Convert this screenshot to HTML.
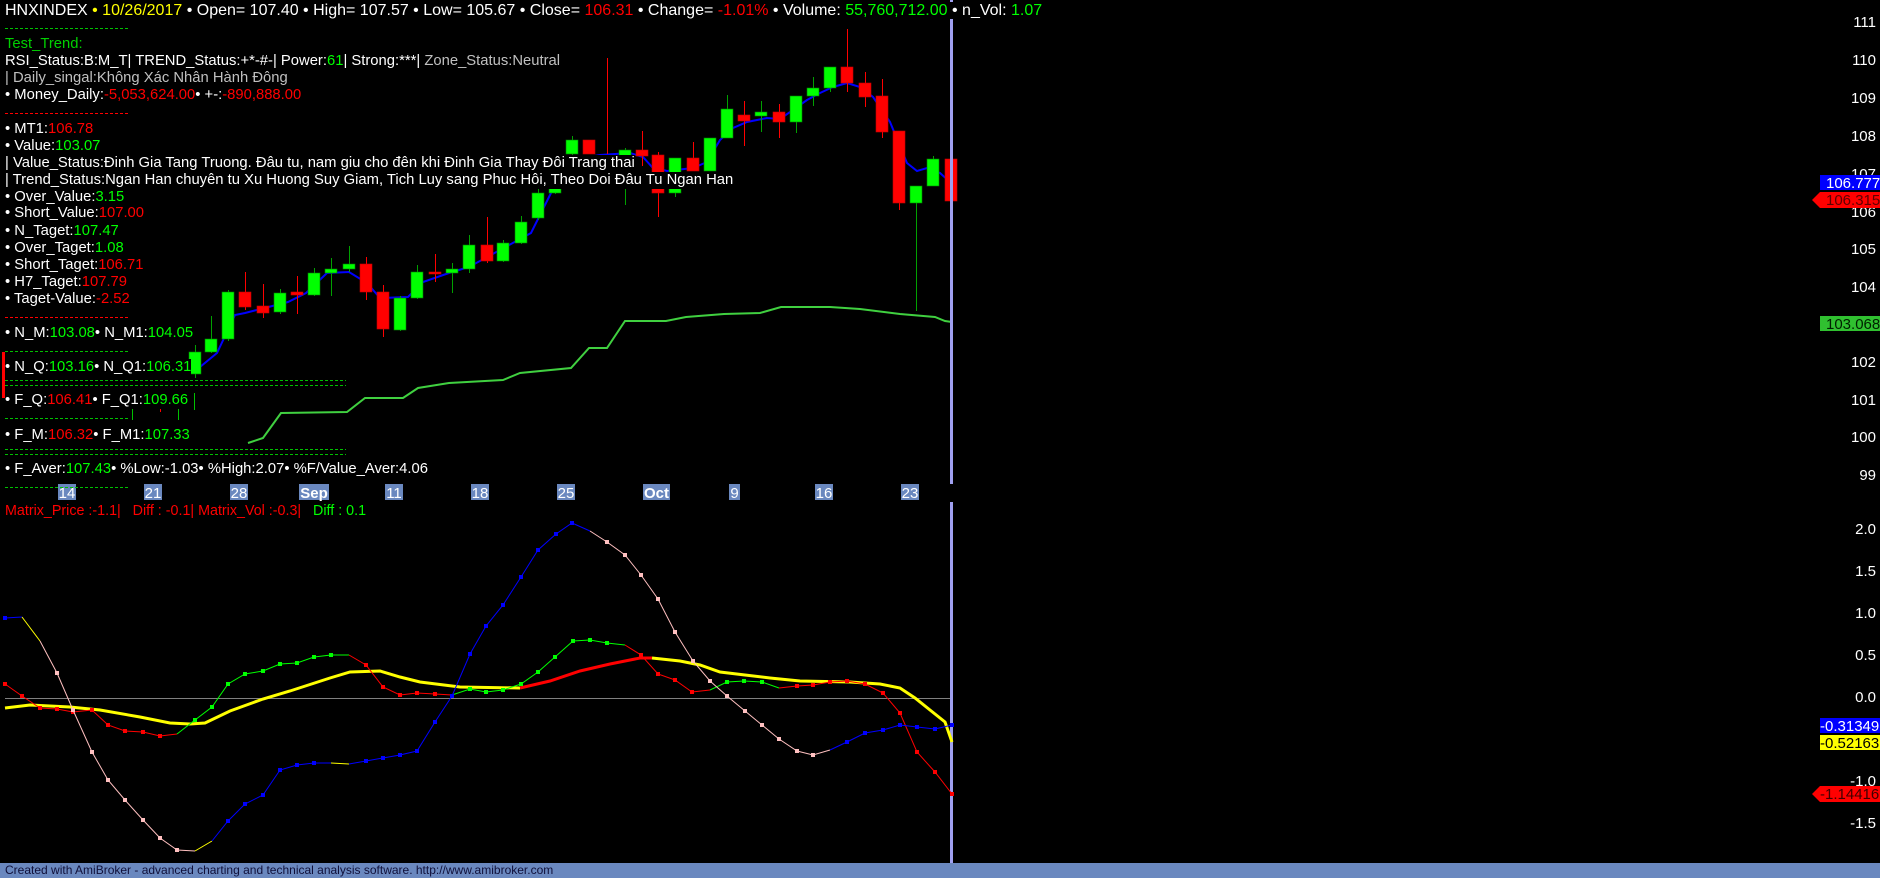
<!DOCTYPE html>
<html><head><meta charset="utf-8"><style>
html,body{margin:0;padding:0;background:#000;width:1880px;height:878px;overflow:hidden}
body{position:relative;font-family:"Liberation Sans",Arial,sans-serif}
svg{position:absolute;left:0;top:0}
.t{position:absolute;left:5px;font-size:14.8px;line-height:17px;color:#fff;background:#000;white-space:nowrap}
.h{font-size:16px}
.g{color:#00ff00}.r{color:#ff0000}.y{color:#ffff00}.gr{color:#c0c0c0}.tg{color:#00d000}
.foot{position:absolute;left:0;top:863px;width:1880px;height:15px;background:#6a88bf;color:#10103a;font-size:12px;line-height:15px;padding-left:5px;box-sizing:border-box}
</style></head><body>
<svg width="1880" height="878" xmlns="http://www.w3.org/2000/svg">
<defs>
<marker id="mr" markerWidth="4" markerHeight="4" refX="2" refY="2" markerUnits="userSpaceOnUse"><rect width="4" height="4" fill="#ff0000"/></marker>
<marker id="mg" markerWidth="4" markerHeight="4" refX="2" refY="2" markerUnits="userSpaceOnUse"><rect width="4" height="4" fill="#00ff00"/></marker>
<marker id="mb" markerWidth="4" markerHeight="4" refX="2" refY="2" markerUnits="userSpaceOnUse"><rect width="4" height="4" fill="#0000ff"/></marker>
<marker id="mp" markerWidth="4" markerHeight="4" refX="2" refY="2" markerUnits="userSpaceOnUse"><rect width="4" height="4" fill="#ffc0c0"/></marker>
<marker id="my" markerWidth="4" markerHeight="4" refX="2" refY="2" markerUnits="userSpaceOnUse"><rect width="4" height="4" fill="#ffff00"/></marker>
</defs>
<polyline fill="none" stroke="#40d040" stroke-width="2" points="248,443 263,438 281,413 347,412 365,398 403,398 418,388 449,383 503,380 520,373 571,368 589,348 607,348 625,321 666,321 686,317 724,314 760,313 781,307 830,307 860,309 900,314 935,317 945,321 952,322"/>
<polyline fill="none" stroke="#0000ff" stroke-width="2" points="200,367 217,353 235,315 245,313 288,302 306,293 327,273 349,272 367,283 380,298 408,297 423,282 449,273 469,267 531,233 551,193 572,160 600,155 630,153 643,157 652,167 667,171 693,168 707,162 720,140 733,128 747,122 767,118 780,119 793,110 807,100 820,93 833,87 847,83 860,87 873,97 890,122 907,163 917,171 927,168 940,173 950,182"/>
<g id="candles"></g>
<g stroke-width="1">
<line x1="607.5" y1="58" x2="607.5" y2="154" stroke="#ff0000"/>
<line x1="132.5" y1="393" x2="132.5" y2="420" stroke="#00c000"/>
<line x1="142.5" y1="393" x2="142.5" y2="405" stroke="#00c000"/>
<line x1="160.5" y1="393" x2="160.5" y2="412" stroke="#ff0000"/>
<line x1="178.5" y1="393" x2="178.5" y2="420" stroke="#00c000"/>
<line x1="194.5" y1="393" x2="194.5" y2="410" stroke="#00c000"/>
</g>
<rect x="950" y="0" width="3" height="484" fill="#a0a0f0"/>
<rect x="950" y="502" width="3" height="361" fill="#a0a0f0"/>
<g font-size="15" fill="#fff" text-anchor="middle">
<rect x="58" y="484" width="18" height="16" fill="#6a88bf"/><text x="67" y="498">14</text>
<rect x="144" y="484" width="18" height="16" fill="#6a88bf"/><text x="153" y="498">21</text>
<rect x="230" y="484" width="18" height="16" fill="#6a88bf"/><text x="239" y="498">28</text>
<rect x="299" y="484" width="30" height="16" fill="#6a88bf"/><text x="314" y="498" font-weight="bold">Sep</text>
<rect x="385" y="484" width="18" height="16" fill="#6a88bf"/><text x="394" y="498">11</text>
<rect x="471" y="484" width="18" height="16" fill="#6a88bf"/><text x="480" y="498">18</text>
<rect x="557" y="484" width="18" height="16" fill="#6a88bf"/><text x="566" y="498">25</text>
<rect x="643" y="484" width="27" height="16" fill="#6a88bf"/><text x="656.5" y="498" font-weight="bold">Oct</text>
<rect x="729" y="484" width="11" height="16" fill="#6a88bf"/><text x="734.5" y="498">9</text>
<rect x="815" y="484" width="18" height="16" fill="#6a88bf"/><text x="824" y="498">16</text>
<rect x="901" y="484" width="18" height="16" fill="#6a88bf"/><text x="910" y="498">23</text>
</g>
<line x1="5" y1="487.5" x2="130" y2="487.5" stroke="#00c000" stroke-dasharray="3,2"/>
<line x1="5" y1="698.5" x2="950" y2="698.5" stroke="#808080"/>
<g fill="none" stroke-width="3">
<polyline stroke="#ffff00" points="5,708 30,705 70,707 100,710 140,717 170,723 190,724 205,723 230,711 263,699 290,691 330,678 350,672 380,671 400,677 420,682 460,687 520,688"/>
<polyline stroke="#ff0000" points="520,688 550,681 580,671 610,664 640,658 652,658"/>
<polyline stroke="#ffff00" points="652,658 680,661 700,665 720,672 745,675 770,678 800,681 850,682 880,684 900,688 915,698 930,710 945,722 952,742"/>
</g>
<g fill="none" stroke-width="1">
<polyline stroke="#ff0000" marker-start="url(#mr)" marker-mid="url(#mr)" points="5,684 22,696 40,708 57,709 73,712 92,710 108,725 125,731 143,732 160,736 177,734"/>
<polyline stroke="#00ff00" marker-mid="url(#mg)" points="177,734 195,720 212,707 228,684 245,674 263,671 280,664 297,663 314,657 331,655 349,655"/>
<polyline stroke="#ff0000" marker-mid="url(#mr)" points="349,655 366,665 383,687 400,695 417,693 435,694 452,695"/>
<polyline stroke="#00ff00" marker-mid="url(#mg)" points="452,695 470,689 486,692 503,690 521,684 538,672 555,657 573,641 590,640 607,643 625,645"/>
<polyline stroke="#ff0000" marker-mid="url(#mr)" points="625,645 641,655 658,674 675,680 692,692 710,690"/>
<polyline stroke="#00ff00" marker-mid="url(#mg)" points="710,690 727,682 744,681 762,682 779,688"/>
<polyline stroke="#ff0000" marker-mid="url(#mr)" marker-end="url(#mr)" points="779,688 797,686 813,685 830,682 847,681 865,684 883,693 900,713 917,752 935,772 952,794"/>
<polyline stroke="#0000ff" marker-start="url(#mb)" points="5,618 22,617"/>
<polyline stroke="#ffff00" points="22,617 40,641"/>
<polyline stroke="#ffc0c0" marker-mid="url(#mp)" points="40,641 57,673 73,710 92,752 108,780 125,800 143,820 160,838 177,850 195,851"/>
<polyline stroke="#ffff00" points="195,851 212,841"/>
<polyline stroke="#0000ff" marker-mid="url(#mb)" points="212,841 228,821 245,804 263,795 280,770 297,765 314,763 331,763"/>
<polyline stroke="#ffff00" points="331,763 349,764"/>
<polyline stroke="#0000ff" marker-mid="url(#mb)" points="349,764 366,761 383,758 400,755 417,751 435,722 452,696 470,654 486,626 503,605 521,577 538,550 556,534 572,523 590,531"/>
<polyline stroke="#ffc0c0" marker-mid="url(#mp)" points="590,531 607,542 625,555 641,575 658,599 675,632 693,661 710,681 727,696 745,711 762,725 779,739 797,751 813,755 830,750"/>
<polyline stroke="#0000ff" marker-mid="url(#mb)" marker-end="url(#mb)" points="830,750 847,742 865,733 883,730 900,725 917,727 935,729 952,725"/>
</g>
<g font-size="15" fill="#fff" text-anchor="end">
<text x="1876" y="27">111</text><text x="1876" y="65">110</text><text x="1876" y="103">109</text><text x="1876" y="141">108</text><text x="1876" y="179">107</text><text x="1876" y="217">106</text><text x="1876" y="254">105</text><text x="1876" y="292">104</text><text x="1876" y="367">102</text><text x="1876" y="405">101</text><text x="1876" y="442">100</text><text x="1876" y="480">99</text>
<text x="1876" y="534">2.0</text><text x="1876" y="576">1.5</text><text x="1876" y="618">1.0</text><text x="1876" y="660">0.5</text><text x="1876" y="702">0.0</text><text x="1876" y="786">-1.0</text><text x="1876" y="828">-1.5</text>
</g>
<g font-size="15">
<rect x="1820" y="175" width="60" height="15" fill="#0000ff"/><text x="1826" y="188" fill="#fff">106.777</text>
<polygon points="1812,200 1820,192 1880,192 1880,208 1820,208" fill="#ff0000"/><text x="1826" y="205" fill="#600000">106.315</text>
<rect x="1820" y="316" width="60" height="15" fill="#30c030"/><text x="1826" y="329" fill="#002000">103.068</text>
<rect x="1820" y="718" width="60" height="15" fill="#0000ff"/><text x="1820" y="731" fill="#fff">-0.31349</text>
<rect x="1820" y="735" width="60" height="15" fill="#ffff00"/><text x="1820" y="748" fill="#000">-0.52163</text>
<polygon points="1812,794 1820,786 1880,786 1880,802 1820,802" fill="#ff0000"/><text x="1820" y="799" fill="#400000">-1.14416</text>
</g>
<g stroke-dasharray="3,2" stroke-width="1">
<line x1="5" y1="28.5" x2="130" y2="28.5" stroke="#00c000"/>
<line x1="5" y1="113.5" x2="130" y2="113.5" stroke="#ff0000"/>
<line x1="5" y1="317.5" x2="130" y2="317.5" stroke="#ff0000"/>
<line x1="5" y1="351.5" x2="130" y2="351.5" stroke="#00c000"/>
<line x1="5" y1="380.5" x2="346" y2="380.5" stroke="#00c000"/>
<line x1="5" y1="385.5" x2="346" y2="385.5" stroke="#00c000"/>
<line x1="5" y1="418.5" x2="130" y2="418.5" stroke="#00c000"/>
<line x1="5" y1="449.5" x2="346" y2="449.5" stroke="#00c000"/>
<line x1="5" y1="454.5" x2="346" y2="454.5" stroke="#00c000"/>
</g>
<rect x="2" y="352" width="3" height="46" fill="#ff0000"/>
</svg>
<script>
(function(){
var C=[[195,352,374,345,378,'g'],[211,339,352,316,353,'g'],[228,292,339,290,341,'g'],[245,292,307,272,310,'r'],[263,306,313,284,318,'r'],[280,293,312,289,314,'g'],[297,292,295,276,314,'r'],[314,273,295,268,296,'g'],[331,269,273,258,296,'g'],[349,264,269,246,272,'g'],[366,264,292,257,300,'r'],[383,292,329,285,337,'r'],[400,298,330,296,331,'g'],[417,272,298,265,299,'g'],[435,272,274,254,282,'r'],[452,269,273,263,293,'g'],[469,245,269,235,273,'g'],[487,245,261,217,263,'r'],[503,243,261,240,262,'g'],[521,222,243,216,244,'g'],[538,193,218,189,220,'g'],[555,188,193,186,194,'g'],[572,140,154,136,155,'g'],[589,140,154,140,154,'r'],[625,150,158,148,205,'g'],[642,150,156,131,166,'r'],[658,155,193,152,217,'r'],[675,158,193,158,197,'g'],[693,158,171,142,171,'r'],[710,138,171,138,171,'g'],[727,109,138,95,138,'g'],[744,115,121,101,146,'r'],[761,112,116,101,132,'g'],[779,112,122,104,138,'r'],[796,96,122,96,133,'g'],[813,88,96,77,106,'g'],[830,67,88,67,92,'g'],[847,67,83,29,92,'r'],[865,83,97,72,107,'r'],[882,96,132,79,138,'r'],[899,131,203,131,210,'r'],[916,186,203,186,311,'g'],[933,159,186,156,186,'g'],[951,159,201,154,223,'r']];
var g=document.getElementById('candles'),s='';
C.forEach(function(c){var col=c[5]=='g'?'#00ff00':'#ff0000',wc=c[5]=='g'?'#00a000':'#ff0000';
s+='<line x1="'+(c[0]+.5)+'" y1="'+c[3]+'" x2="'+(c[0]+.5)+'" y2="'+c[4]+'" stroke="'+wc+'"/>';
s+='<rect x="'+(c[0]-6)+'" y="'+c[1]+'" width="12" height="'+Math.max(2,c[2]-c[1])+'" fill="'+col+'" stroke="'+(c[5]=='g'?'#008000':'#c00000')+'" stroke-width="0.6"/>';});
g.innerHTML=s;})();
</script>
<div class="t h" style="top:2px">HNXINDEX <span class="y">• 10/26/2017</span> • Open= 107.40 • High= 107.57 • Low= 105.67 • Close= <span class="r">106.31</span> • Change= <span class="r">-1.01%</span> • Volume: <span class="g">55,760,712.00</span> • n_Vol: <span class="g">1.07</span></div>
<div class="t tg" style="top:36px">Test_Trend:</div>
<div class="t" style="top:53px">RSI_Status:B:M_T| TREND_Status:+*-#-| Power:<span class="g">61</span>| Strong:***| <span class="gr">Zone_Status:Neutral</span></div>
<div class="t gr" style="top:70px">| Daily_singal:Không Xác Nhân Hành Đông</div>
<div class="t" style="top:87px">• Money_Daily:<span class="r">-5,053,624.00</span>• +-:<span class="r">-890,888.00</span></div>
<div class="t" style="top:121px">• MT1:<span class="r">106.78</span></div>
<div class="t" style="top:138px">• Value:<span class="g">103.07</span></div>
<div class="t" style="top:155px">| Value_Status:Đinh Gia Tang Truong. Đâu tu, nam giu cho đên khi Đinh Gia Thay Đôi Trang thai</div>
<div class="t" style="top:172px">| Trend_Status:Ngan Han chuyên tu Xu Huong Suy Giam, Tich Luy sang Phuc Hôi, Theo Doi Đâu Tu Ngan Han</div>
<div class="t" style="top:189px">• Over_Value:<span class="g">3.15</span></div>
<div class="t" style="top:205px">• Short_Value:<span class="r">107.00</span></div>
<div class="t" style="top:223px">• N_Taget:<span class="g">107.47</span></div>
<div class="t" style="top:240px">• Over_Taget:<span class="g">1.08</span></div>
<div class="t" style="top:257px">• Short_Taget:<span class="r">106.71</span></div>
<div class="t" style="top:274px">• H7_Taget:<span class="r">107.79</span></div>
<div class="t" style="top:291px">• Taget-Value:<span class="r">-2.52</span></div>
<div class="t" style="top:325px">• N_M:<span class="g">103.08</span>• N_M1:<span class="g">104.05</span></div>
<div class="t" style="top:359px">• N_Q:<span class="g">103.16</span>• N_Q1:<span class="g">106.31</span></div>
<div class="t" style="top:392px">• F_Q:<span class="r">106.41</span>• F_Q1:<span class="g">109.66</span></div>
<div class="t" style="top:427px">• F_M:<span class="r">106.32</span>• F_M1:<span class="g">107.33</span></div>
<div class="t" style="top:461px">• F_Aver:<span class="g">107.43</span>• %Low:-1.03• %High:2.07• %F/Value_Aver:4.06</div>
<div class="t r" style="top:503px;font-size:14.3px">Matrix_Price :-1.1|&nbsp;&nbsp; Diff : -0.1| Matrix_Vol :-0.3|&nbsp;&nbsp; <span class="g">Diff : 0.1</span></div>
<div class="foot">Created with AmiBroker - advanced charting and technical analysis software. http://www.amibroker.com</div>
</body></html>
